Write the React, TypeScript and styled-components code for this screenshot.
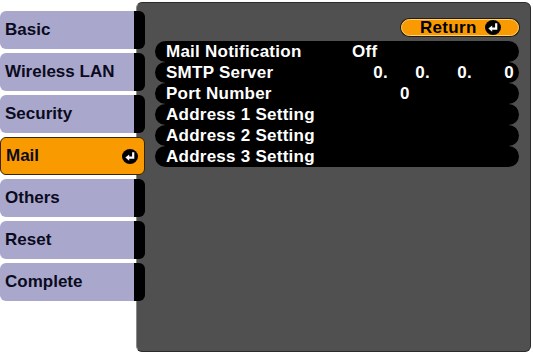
import styled, {createGlobalStyle} from 'styled-components'

const GlobalStyle = createGlobalStyle`
    html, body {
        margin: 0;
        padding: 0;
        background: #ffffff;
    }
    body {
        font-family: "Liberation Sans", Arial, sans-serif;
    }
`

const tabs = ['Basic', 'Wireless LAN', 'Security', 'Mail', 'Others', 'Reset', 'Complete']

// the round enter key mark used on the selected tab and the Return button
const EnterIcon = () => (
    <svg width="16" height="15" viewBox="0 0 16 15">
        <ellipse cx="8" cy="7.5" rx="8" ry="7.5" fill="#000" />
        <path d="M11.2 3.2 V8.6 H6.4" fill="none" stroke="#fff" strokeWidth="2.2" />
        <path d="M3.4 8.6 L7.2 5.4 L7.2 11.8 Z" fill="#fff" />
    </svg>
)

const App = () => {
    return (
        <>
            <GlobalStyle />
            <Screen>
                <Sidebar>
                    {tabs.map((name) =>
                        name === 'Mail' ? (
                            <ActiveTab key={name}>
                                <TabLabel>{name}</TabLabel>
                                <EnterIcon />
                            </ActiveTab>
                        ) : (
                            <Tab key={name}>
                                <TabBody>
                                    <TabLabel>{name}</TabLabel>
                                </TabBody>
                                <Notch />
                            </Tab>
                        )
                    )}
                </Sidebar>
                <Panel>
                    <ReturnButton>
                        <span>Return</span>
                        <EnterIcon />
                    </ReturnButton>
                    <Rows>
                        <Row>
                            <Label>Mail Notification</Label>
                            <Value $indent={6}>Off</Value>
                        </Row>
                        <Row>
                            <Label>SMTP Server</Label>
                            <IpGrid>
                                <Octet>0.</Octet>
                                <Octet>0.</Octet>
                                <Octet>0.</Octet>
                                <Octet>0</Octet>
                            </IpGrid>
                        </Row>
                        <Row>
                            <Label>Port Number</Label>
                            <Value $indent={54}>0</Value>
                        </Row>
                        <Row>
                            <Label>Address 1 Setting</Label>
                        </Row>
                        <Row>
                            <Label>Address 2 Setting</Label>
                        </Row>
                        <Row>
                            <Label>Address 3 Setting</Label>
                        </Row>
                    </Rows>
                </Panel>
            </Screen>
        </>
    )
}

export default App

const Screen = styled.div`
    display: flex;
    align-items: flex-start;
    width: 533px;
    height: 355px;
    overflow: hidden;
`

const Sidebar = styled.div`
    position: relative;
    z-index: 1;
    flex: none;
    width: 145px;
    margin-right: -9px;
    padding-top: 11px;
    display: flex;
    flex-direction: column;
    gap: 4px;
`

const Tab = styled.div`
    display: flex;
    height: 38px;
`

const TabBody = styled.div`
    width: 134px;
    display: flex;
    align-items: center;
    background: #a9a7cc;
    border-radius: 6px 0 0 6px;
`

const Notch = styled.div`
    width: 11px;
    background: #000;
    border-radius: 0 6px 6px 0;
`

const ActiveTab = styled.div`
    height: 36px;
    display: flex;
    align-items: center;
    justify-content: space-between;
    padding-right: 6px;
    background: #f99b00;
    border: 1px solid #3a2600;
    border-radius: 6px;
`

const TabLabel = styled.span`
    padding-left: 5px;
    font-size: 17px;
    font-weight: bold;
    color: #0b0b1e;
`

const Panel = styled.div`
    flex: none;
    width: 395px;
    height: 350px;
    margin-top: 2px;
    box-sizing: border-box;
    padding: 16px 11px 0 18px;
    display: flex;
    flex-direction: column;
    background: #505050;
    border: 1px solid #2c2c2c;
    border-left-color: #8a8a8a;
    border-radius: 6px;
`

const ReturnButton = styled.div`
    align-self: flex-end;
    width: 118px;
    height: 17px;
    box-sizing: border-box;
    padding-left: 18px;
    display: flex;
    align-items: center;
    gap: 8px;
    background: #f99b00;
    border: 1px solid #ffd385;
    border-radius: 9px;
    box-shadow: 0 0 0 1px #2a1c00;
    font-size: 17px;
    font-weight: bold;
    color: #000;
    letter-spacing: 0.3px;
`

const Rows = styled.div`
    margin-top: 5px;
    display: flex;
    flex-direction: column;
`

const Row = styled.div`
    height: 21px;
    display: flex;
    align-items: center;
    padding-left: 11px;
    background: #000;
    border-radius: 10.5px;
    color: #fff;
    font-size: 17px;
    font-weight: bold;
    letter-spacing: 0.25px;
`

const Label = styled.span`
    flex: none;
    width: 180px;
    white-space: nowrap;
`

const Value = styled.span<{$indent: number}>`
    padding-left: ${(p) => p.$indent}px;
`

const IpGrid = styled.div`
    display: grid;
    grid-template-columns: repeat(4, 42px);
`

const Octet = styled.span`
    text-align: right;
`
